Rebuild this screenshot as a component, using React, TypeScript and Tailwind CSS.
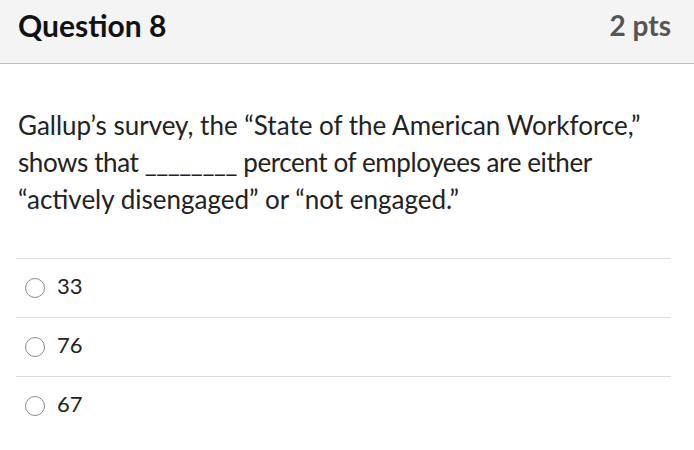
const options = ["33", "76", "67"];

export default function App() {
  return (
    <div
      className="w-[694px] h-[450px] bg-white text-[#222]"
      style={{ fontFamily: "Lato, 'Open Sans', sans-serif" }}
    >
      <div className="h-[64px] bg-[#f4f4f4] border-b border-[#bdbdbd] flex items-start justify-between pt-[7px] pl-[18px] pr-[23px]">
        <h2 className="text-[30px] leading-[36px] font-bold text-[#111]">Question 8</h2>
        <span className="text-[28px] leading-[36px] font-bold text-[#555]">2 pts</span>
      </div>

      <div className="pl-[16px] pr-[23px] pt-[43px]">
        <p className="pl-[2px] text-[26px] leading-[37px] text-[#222]">
          Gallup’s survey, the “State of the American Workforce,”{" "}
          <span className="tracking-[-0.4px]">
            shows that ________ percent of employees are either
          </span>{" "}
          “actively disengaged” or “not engaged.”
        </p>

        <div className="mt-[40px]">
          {options.map((o) => (
            <label
              key={o}
              className="h-[59px] border-t border-[#dcdcdc] flex items-center pl-[9px] gap-[12px]"
            >
              <span className="w-[20px] h-[20px] rounded-full border border-[#8a8a8a] bg-white" />
              <span className="text-[22px] text-[#222] -translate-y-[3px]">{o}</span>
            </label>
          ))}
        </div>
      </div>
    </div>
  );
}
